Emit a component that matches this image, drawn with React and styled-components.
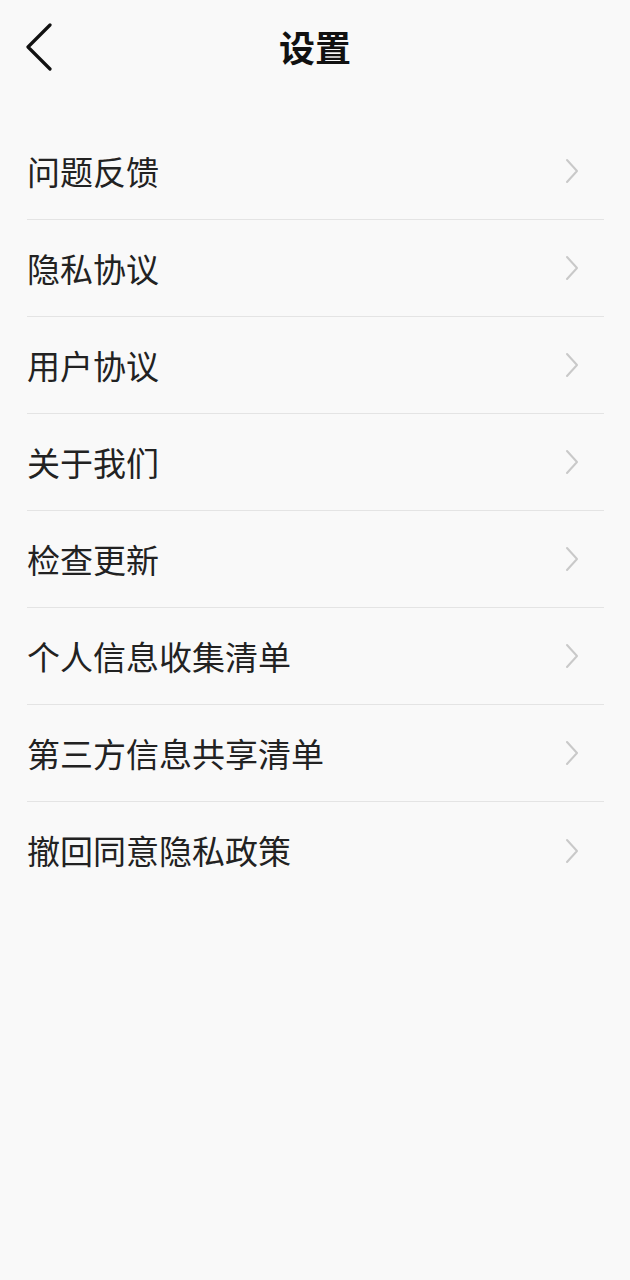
import React from 'react'
import styled, { createGlobalStyle } from 'styled-components'

const GlobalStyle = createGlobalStyle`
    html, body {
        margin: 0;
        padding: 0;
        background: #f9f9f9;
    }
    body {
        font-family: "Noto Sans CJK SC", "Noto Sans", sans-serif;
    }
`

const items = [
    '问题反馈',
    '隐私协议',
    '用户协议',
    '关于我们',
    '检查更新',
    '个人信息收集清单',
    '第三方信息共享清单',
    '撤回同意隐私政策',
]

const BackIcon = () => (
    <svg width="32" height="50" viewBox="0 0 32 50">
        <path d="M28 4 L6 26 L28 48" fill="none" stroke="#111" strokeWidth="3.2" strokeLinecap="round" strokeLinejoin="round" />
    </svg>
)

const Chevron = () => (
    <svg width="14" height="26" viewBox="0 0 14 26">
        <path d="M2 2 L12 13 L2 24" fill="none" stroke="#c9c9c9" strokeWidth="2" strokeLinecap="round" strokeLinejoin="round" />
    </svg>
)

const App = () => {
    return (
        <>
            <GlobalStyle />
            <Page>
                <TopBar>
                    <BackButton><BackIcon /></BackButton>
                    <Title>设置</Title>
                </TopBar>
                <List>
                    {items.map((label, i) => (
                        <Row key={label} last={i === items.length - 1}>
                            <Label>{label}</Label>
                            <Chevron />
                        </Row>
                    ))}
                </List>
            </Page>
        </>
    )
}

export default App

const Page = styled.div`
    width: 630px;
    min-height: 1280px;
    background: #f9f9f9;
`

const TopBar = styled.header`
    position: relative;
    height: 98px;
    display: flex;
    align-items: center;
    justify-content: center;
`

const BackButton = styled.div`
    position: absolute;
    left: 22px;
    top: 21px;
    display: flex;
`

const Title = styled.h1`
    margin: 0;
    margin-top: -6px;
    font-size: 36px;
    font-weight: 700;
    color: #111;
    letter-spacing: 0;
`

const List = styled.ul`
    list-style: none;
    margin: 0;
    padding: 25px 26px 0 27px;
`

const Row = styled.li`
    height: 97px;
    display: flex;
    align-items: center;
    justify-content: space-between;
    padding-right: 25px;
    border-bottom: ${props => props.last ? 'none' : '1px solid #e4e4e4'};
    box-sizing: border-box;
`

const Label = styled.span`
    font-size: 33px;
    color: #222;
    line-height: 1;
`
